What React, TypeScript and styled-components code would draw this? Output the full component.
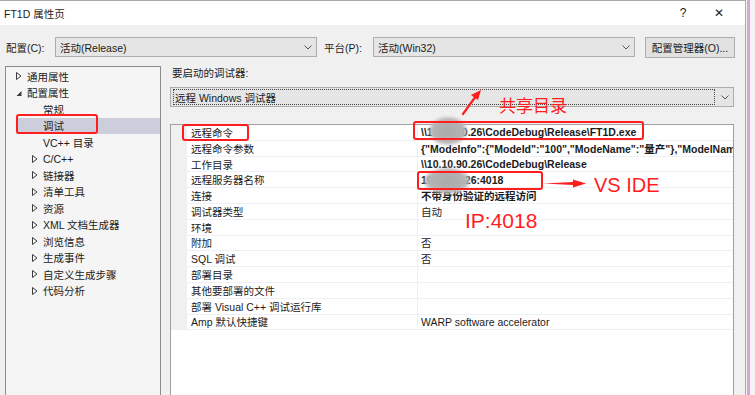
import React from 'react'
import styled, { createGlobalStyle } from 'styled-components'

const GlobalStyle = createGlobalStyle`
  html, body {
    margin: 0;
    padding: 0;
    background: #ffffff;
  }
  body {
    font-family: "Liberation Sans", "Noto Sans CJK SC", sans-serif;
    font-size: 10.5px;
    color: #1b1b1b;
  }
`

const RED = '#ff1e1e'

const Page = styled.div`
  position: relative;
  width: 755px;
  height: 395px;
  overflow: hidden;
  display: flex;
  background: #ffffff;
`

const Window = styled.div`
  width: 746px;
  height: 395px;
  display: flex;
  flex-direction: column;
  background: #f0f0f0;
  border-top: 1px solid #a9a9a9;
  border-right: 1px solid #a9a9a9;
  box-sizing: border-box;
`

const Strip = styled.div`
  width: 9px;
  display: flex;
  background: #f4f4f4;
  &::before {
    content: '';
    width: 3px;
    margin-left: 1px;
    background: #d6a6d6;
  }
`

const TitleBar = styled.div`
  height: 24px;
  background: #ffffff;
  display: flex;
  align-items: center;
  padding-left: 4px;
  font-size: 10.5px;
`

const Title = styled.span`
  flex: 1;
`

const CaptionButton = styled.span<{ w: number }>`
  width: ${(p) => p.w}px;
  text-align: center;
  font-size: 12px;
  color: #222;
`

const ConfigBar = styled.div`
  display: flex;
  align-items: center;
  height: 20px;
  margin-top: 12px;
  padding-left: 6px;
`

const Label = styled.span<{ w: number }>`
  width: ${(p) => p.w}px;
  flex: none;
`

const Combo = styled.div<{ w: number }>`
  width: ${(p) => p.w}px;
  height: 20px;
  box-sizing: border-box;
  background: #e5e5e5;
  border: 1px solid #adadad;
  display: flex;
  align-items: center;
  padding-left: 4px;
  flex: none;
`

const ComboText = styled.span`
  flex: 1;
`

const Chevron = styled.svg`
  width: 8px;
  height: 5px;
  margin-right: 4px;
  flex: none;
`

const Button = styled.div`
  width: 90px;
  height: 21px;
  margin-left: 10px;
  box-sizing: border-box;
  background: #e1e1e1;
  border: 1px solid #adadad;
  display: flex;
  align-items: center;
  justify-content: center;
`

const Body = styled.div`
  flex: 1;
  display: flex;
  margin-top: 9px;
  min-height: 0;
`

const Tree = styled.div`
  width: 156px;
  margin-left: 5px;
  box-sizing: border-box;
  background: #f5f5f5;
  border: 1px solid #8c8c8c;
  border-bottom: none;
  padding-top: 1px;
`

const TreeRow = styled.div<{ level: number; selected?: boolean }>`
  height: 16.5px;
  display: flex;
  align-items: center;
  padding-left: ${(p) => (p.level === 0 ? 10 : p.level === 1 ? 26 : 37)}px;
  margin-left: ${(p) => (p.selected ? 10 : 0)}px;
  padding-left: ${(p) => (p.selected ? 27 : p.level === 0 ? 10 : p.level === 1 ? 26 : 37)}px;
  background: ${(p) => (p.selected ? '#cccfdb' : 'transparent')};
`

const Twisty = styled.svg`
  width: 6px;
  height: 8px;
  margin-right: 5px;
  flex: none;
`

const RightPane = styled.div`
  width: 564px;
  margin-left: 9px;
  display: flex;
  flex-direction: column;
`

const PaneLabel = styled.div`
  height: 14px;
  line-height: 14px;
  padding-left: 2px;
`

const DebuggerCombo = styled(Combo)`
  margin-top: 7px;
  padding-left: 2px;
`

const FocusRect = styled.div`
  flex: 1;
  height: 16px;
  border: 1px dotted #444;
  box-sizing: border-box;
  display: flex;
  align-items: center;
  padding-left: 1px;
  margin-right: 6px;
`

const Grid = styled.div`
  margin-top: 17px;
  flex: 1;
  background: #ffffff;
  border: 1px solid #a0a0a0;
  border-bottom: none;
`

const GridRow = styled.div`
  height: 15.8px;
  display: grid;
  grid-template-columns: 16px 230px 1fr;
`

const Gutter = styled.div`
  background: #f0f0f0;
`

const Cell = styled.div<{ bold?: boolean; value?: boolean }>`
  display: flex;
  align-items: center;
  padding-left: ${(p) => (p.value ? 3 : 4)}px;
  border-bottom: 1px solid #edf0f5;
  border-left: ${(p) => (p.value ? '1px solid #edf0f5' : 'none')};
  font-weight: ${(p) => (p.bold ? 700 : 400)};
  white-space: nowrap;
  overflow: hidden;
`

const Mark = styled.div<{ l: number; t: number; w: number; h: number }>`
  position: absolute;
  left: ${(p) => p.l}px;
  top: ${(p) => p.t}px;
  width: ${(p) => p.w}px;
  height: ${(p) => p.h}px;
  border: 2px solid ${RED};
  border-radius: 3px;
  box-sizing: border-box;
`

const Smudge = styled.div<{ l: number; t: number; w: number; h: number }>`
  position: absolute;
  left: ${(p) => p.l}px;
  top: ${(p) => p.t}px;
  width: ${(p) => p.w}px;
  height: ${(p) => p.h}px;
  border-radius: 50%;
  background: radial-gradient(ellipse at center, #a9a9a9 0%, #b4b4b4 55%, rgba(200, 200, 200, 0.6) 80%, rgba(230, 230, 230, 0) 100%);
  filter: blur(1.5px);
`

const Note = styled.div<{ l: number; t: number; size: number }>`
  position: absolute;
  left: ${(p) => p.l}px;
  top: ${(p) => p.t}px;
  font-size: ${(p) => p.size}px;
  line-height: 1;
  color: ${RED};
  font-family: "Liberation Sans", "Noto Sans CJK SC", sans-serif;
  white-space: nowrap;
`

const Overlay = styled.svg`
  position: absolute;
  left: 0;
  top: 0;
  width: 755px;
  height: 395px;
  pointer-events: none;
`

const ChevronIcon = () => (
  <Chevron viewBox="0 0 8 5">
    <path d="M0.5 0.5L4 4L7.5 0.5" fill="none" stroke="#555" strokeWidth="1" />
  </Chevron>
)

const Collapsed = () => (
  <Twisty viewBox="0 0 6 8">
    <path d="M0.5 0.5L5 4L0.5 7.5Z" fill="none" stroke="#3c3c3c" strokeWidth="1" />
  </Twisty>
)

const Expanded = () => (
  <Twisty viewBox="0 0 6 8">
    <path d="M5.5 2L5.5 7L0.5 7Z" fill="#3c3c3c" />
  </Twisty>
)

type Node = { label: string; level: number; kind?: 'open' | 'closed'; selected?: boolean }

const treeItems: Node[] = [
  { label: '通用属性', level: 0, kind: 'closed' },
  { label: '配置属性', level: 0, kind: 'open' },
  { label: '常规', level: 2 },
  { label: '调试', level: 2, selected: true },
  { label: 'VC++ 目录', level: 2 },
  { label: 'C/C++', level: 1, kind: 'closed' },
  { label: '链接器', level: 1, kind: 'closed' },
  { label: '清单工具', level: 1, kind: 'closed' },
  { label: '资源', level: 1, kind: 'closed' },
  { label: 'XML 文档生成器', level: 1, kind: 'closed' },
  { label: '浏览信息', level: 1, kind: 'closed' },
  { label: '生成事件', level: 1, kind: 'closed' },
  { label: '自定义生成步骤', level: 1, kind: 'closed' },
  { label: '代码分析', level: 1, kind: 'closed' },
]

const props: { name: string; value: string; bold?: boolean }[] = [
  { name: '远程命令', value: '\\\\10.10.90.26\\CodeDebug\\Release\\FT1D.exe', bold: true },
  { name: '远程命令参数', value: '{"ModeInfo":{"ModeId":"100","ModeName":"量产"},"ModelName":"FT1D"}', bold: true },
  { name: '工作目录', value: '\\\\10.10.90.26\\CodeDebug\\Release', bold: true },
  { name: '远程服务器名称', value: '10.10.90.26:4018', bold: true },
  { name: '连接', value: '不带身份验证的远程访问', bold: true },
  { name: '调试器类型', value: '自动' },
  { name: '环境', value: '' },
  { name: '附加', value: '否' },
  { name: 'SQL 调试', value: '否' },
  { name: '部署目录', value: '' },
  { name: '其他要部署的文件', value: '' },
  { name: '部署 Visual C++ 调试运行库', value: '' },
  { name: 'Amp 默认快捷键', value: 'WARP software accelerator' },
]

export default function App() {
  return (
    <Page>
      <GlobalStyle />
      <Window>
        <TitleBar>
          <Title>FT1D 属性页</Title>
          <CaptionButton w={20}>?</CaptionButton>
          <CaptionButton w={52}>✕</CaptionButton>
        </TitleBar>
        <ConfigBar>
          <Label w={49}>配置(C):</Label>
          <Combo w={262}>
            <ComboText>活动(Release)</ComboText>
            <ChevronIcon />
          </Combo>
          <Label w={56} style={{ paddingLeft: 7, boxSizing: 'border-box' }}>平台(P):</Label>
          <Combo w={262}>
            <ComboText>活动(Win32)</ComboText>
            <ChevronIcon />
          </Combo>
          <Button>配置管理器(O)...</Button>
        </ConfigBar>
        <Body>
          <Tree>
            {treeItems.map((n) => (
              <TreeRow key={n.label} level={n.level} selected={n.selected}>
                {n.kind === 'closed' && <Collapsed />}
                {n.kind === 'open' && <Expanded />}
                {n.label}
              </TreeRow>
            ))}
          </Tree>
          <RightPane>
            <PaneLabel>要启动的调试器:</PaneLabel>
            <DebuggerCombo w={564}>
              <FocusRect>远程 Windows 调试器</FocusRect>
              <ChevronIcon />
            </DebuggerCombo>
            <Grid>
              {props.map((p) => (
                <GridRow key={p.name}>
                  <Gutter />
                  <Cell>{p.name}</Cell>
                  <Cell value bold={p.bold}>{p.value}</Cell>
                </GridRow>
              ))}
            </Grid>
          </RightPane>
        </Body>
      </Window>
      <Strip />

      <Mark l={16} t={114} w={82} h={20} />
      <Mark l={182} t={124} w={67} h={17} />
      <Smudge l={429} t={117} w={38} h={28} />
      <Smudge l={424} t={168} w={46} h={26} />
      <Mark l={413} t={121} w={231} h={19} />
      <Mark l={417} t={171} w={126} h={19} />

      <Overlay viewBox="0 0 755 395">
        <path d="M463 114 L476 96" stroke={RED} strokeWidth="2.2" strokeLinecap="round" />
        <path d="M481 90 L471 95 L478 100 Z" fill={RED} />
        <path d="M543 183.5 L573 182 L573 179.5 L586 183.5 L573 187.5 L573 185 Z" fill={RED} />
      </Overlay>

      <Note l={499} t={98} size={17}>共享目录</Note>
      <Note l={594} t={175} size={20}>VS IDE</Note>
      <Note l={465} t={210} size={21}>IP:4018</Note>
    </Page>
  )
}
